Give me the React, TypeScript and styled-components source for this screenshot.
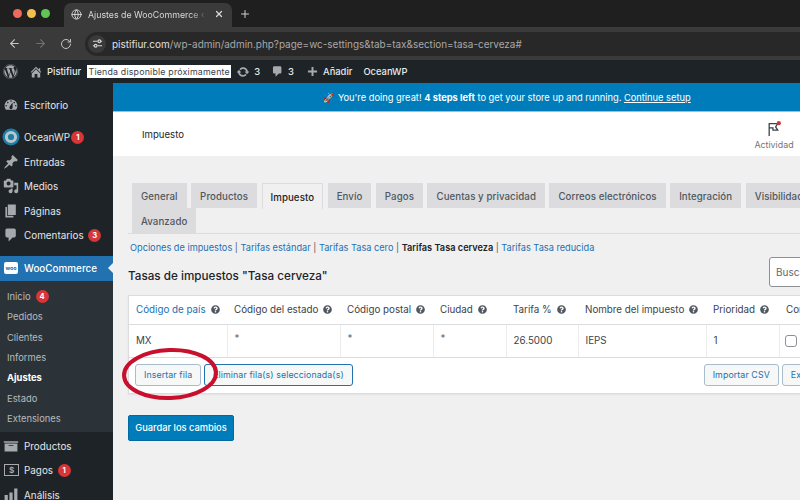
import React from "react";
import styled, { createGlobalStyle } from "styled-components";
import { ArrowLeft, ArrowRight, Globe, Plus, RotateCw, X } from "lucide-react";
import { FaQuestionCircle, FaWordpress } from "react-icons/fa";

const GlobalStyle = createGlobalStyle`
  html, body {
    margin: 0;
    padding: 0;
    background: #f0f0f1;
    font-family: "Inter", "Liberation Sans", sans-serif;
  }
  * {
    box-sizing: border-box;
  }
`;

const Shell = styled.div`
  width: 800px;
  height: 500px;
  display: flex;
  flex-direction: column;
  overflow: hidden;
  position: relative;
`;

/* browser chrome */
const TabStrip = styled.div`
  height: 27px;
  background: #1f1f1f;
  display: flex;
  align-items: flex-end;
  padding-left: 13px;
`;
const Lights = styled.div`
  display: flex;
  gap: 5px;
  align-self: center;
  margin-right: 14px;
`;
const Light = styled.span<{ $color: string }>`
  width: 9px;
  height: 9px;
  border-radius: 50%;
  background: ${(p) => p.$color};
`;
const BrowserTab = styled.div`
  width: 168px;
  height: 24px;
  background: #3a3a3a;
  border-radius: 7px 7px 0 0;
  display: flex;
  align-items: center;
  padding: 0 8px 2px 7px;
  color: #d8d8d8;
  font-size: 8.8px;
  gap: 6px;
  svg {
    flex: none;
  }
`;
const TabTitle = styled.span`
  flex: 1;
  white-space: nowrap;
  overflow: hidden;
  mask-image: linear-gradient(to right, #000 85%, transparent);
`;
const NewTab = styled.div`
  color: #cfcfcf;
  display: flex;
  align-self: center;
  margin-left: 7px;
`;
const Toolbar = styled.div`
  height: 33px;
  background: #3a3a3a;
  display: flex;
  align-items: center;
  padding-left: 8px;
  color: #c4c4c4;
`;
const NavButton = styled.span<{ $dim?: boolean; $width?: number }>`
  display: flex;
  width: ${(p) => p.$width ?? 26}px;
  color: ${(p) => (p.$dim ? "#707070" : "#c4c4c4")};
`;
const AddressBar = styled.div`
  flex: 1;
  height: 24px;
  background: #282828;
  border-radius: 12px 0 0 12px;
  display: flex;
  align-items: center;
  padding-left: 3px;
  font-size: 9.95px;
  color: #a8a8a8;
  white-space: nowrap;
  b {
    font-weight: 400;
    color: #e2e2e2;
  }
`;
const SiteChip = styled.span`
  width: 18px;
  height: 18px;
  border-radius: 50%;
  background: #3a3a3a;
  margin-right: 6px;
  display: flex;
  align-items: center;
  justify-content: center;
`;

/* wp admin bar */
const AdminBar = styled.div`
  height: 23px;
  background: #1d2327;
  display: flex;
  align-items: center;
  color: #e8eaeb;
  font-size: 9.4px;
  font-weight: 500;
  white-space: nowrap;
  svg {
    color: #a7aaad;
    flex: none;
  }
`;
const BarItem = styled.span<{ $gap?: number; $left?: number }>`
  display: flex;
  align-items: center;
  gap: ${(p) => p.$gap ?? 5}px;
  margin-left: ${(p) => p.$left ?? 0}px;
`;
const StoreBadge = styled.span`
  background: #fff;
  color: #3c434a;
  font-weight: 400;
  font-size: 8.8px;
  letter-spacing: 0.2px;
  height: 13px;
  width: 144px;
  margin-left: 6px;
  display: flex;
  align-items: center;
  justify-content: center;
`;

const Body = styled.div`
  flex: 1;
  display: flex;
  min-height: 0;
`;

/* sidebar */
const Sidebar = styled.nav`
  width: 113px;
  flex: none;
  background: #1d2327;
  padding-top: 10px;
  color: #f0f0f1;
  font-size: 9.9px;
`;
const MenuItem = styled.div<{ $top?: number; $current?: boolean }>`
  height: 24.5px;
  margin-top: ${(p) => p.$top ?? 0}px;
  display: flex;
  align-items: center;
  padding-left: 24px;
  position: relative;
  white-space: nowrap;
  background: ${(p) => (p.$current ? "#2271b1" : "transparent")};
  color: ${(p) => (p.$current ? "#fff" : "#e4e6e7")};
  font-weight: ${(p) => (p.$current ? 500 : 400)};
  ${(p) =>
    p.$current &&
    `&::after {
      content: "";
      position: absolute;
      right: 0;
      top: 7px;
      border: 5px solid transparent;
      border-right-color: #f0f0f1;
      border-left-width: 0;
    }`}
`;
const MenuIcon = styled.span`
  position: absolute;
  left: 0;
  top: 0;
  width: 22px;
  height: 100%;
  display: flex;
  align-items: center;
  justify-content: center;
  color: #a7aaad;
`;
const WooIcon = styled.span`
  width: 14px;
  height: 12px;
  background: #fff;
  border-radius: 2px;
  color: #2271b1;
  font-size: 5.4px;
  font-weight: 700;
  display: flex;
  align-items: center;
  justify-content: center;
`;
const Count = styled.span<{ $left?: number }>`
  width: 13px;
  height: 13px;
  border-radius: 50%;
  background: #d63638;
  color: #fff;
  font-size: 7.6px;
  font-weight: 700;
  display: inline-flex;
  align-items: center;
  justify-content: center;
  margin-left: ${(p) => p.$left ?? 4.5}px;
`;
const SubMenu = styled.div`
  background: #2c3338;
  padding: 6px 0 3px;
  margin-bottom: 2px;
  font-size: 9.4px;
`;
const SubItem = styled.div<{ $current?: boolean }>`
  height: 20.3px;
  padding-left: 7px;
  display: flex;
  align-items: center;
  color: ${(p) => (p.$current ? "#fff" : "#b6babd")};
  font-weight: ${(p) => (p.$current ? 700 : 400)};
`;

/* main area */
const Main = styled.main`
  flex: 1;
  min-width: 0;
  overflow: hidden;
  background: #f0f0f1;
  color: #3c434a;
`;
const Banner = styled.div`
  height: 29px;
  background: #007cba;
  color: #fff;
  font-size: 9.3px;
  display: flex;
  align-items: center;
  justify-content: center;
  padding-left: 101px;
  white-space: pre;
  border-bottom: 1px solid #8fc4e0;
  a {
    color: #fff;
    text-decoration: underline;
  }
`;
const Header = styled.header`
  height: 44px;
  background: #fff;
  display: flex;
  align-items: center;
  justify-content: space-between;
  padding-left: 29px;
  font-size: 9.6px;
  color: #1e1e1e;
`;
const Activity = styled.div`
  width: 44px;
  display: flex;
  flex-direction: column;
  align-items: center;
  gap: 3px;
  color: #757575;
  font-size: 8.9px;
  margin-top: 3px;
  margin-right: 4px;
`;
const Content = styled.div`
  width: 716px;
  padding: 27px 0 0 15px;
`;
const TabNav = styled.div`
  display: flex;
  flex-wrap: wrap;
  column-gap: 4.5px;
  padding-left: 4px;
  border-bottom: 1px solid #dcdcde;
`;
const SettingsTab = styled.div<{ $active?: boolean }>`
  height: ${(p) => (p.$active ? 26 : 25)}px;
  margin-bottom: ${(p) => (p.$active ? -1 : 0)}px;
  padding: 1px 8px 0;
  display: flex;
  align-items: center;
  font-size: 9.7px;
  font-weight: 500;
  letter-spacing: 0.07px;
  white-space: nowrap;
  background: ${(p) => (p.$active ? "#f0f0f1" : "#dcdcde")};
  color: ${(p) => (p.$active ? "#1d2327" : "#50575e")};
  border: 1px solid #dcdcde;
  border-bottom-width: ${(p) => (p.$active ? 0 : 1)}px;
`;
const SubLinks = styled.div`
  display: flex;
  margin-top: 8px;
  padding-left: 2px;
  font-size: 9.2px;
  white-space: pre;
  color: #2271b1;
  b {
    color: #1d2327;
    font-weight: 600;
  }
  i {
    color: #50575e;
    font-style: normal;
  }
`;
const TitleRow = styled.div`
  display: flex;
  justify-content: space-between;
  align-items: center;
  margin-top: 4px;
`;
const Title = styled.h2`
  margin: 8px 0 0;
  font-size: 11.7px;
  font-weight: 500;
  color: #1d2327;
`;
const Search = styled.div`
  width: 60px;
  height: 30px;
  background: #fff;
  border: 1px solid #8c8f94;
  border-radius: 3px;
  color: #646970;
  font-size: 10px;
  display: flex;
  align-items: center;
  padding-left: 6px;
`;
const Card = styled.div`
  width: 737px;
  margin-top: 8px;
  background: #fff;
  border: 1px solid #dcdcde;
  box-shadow: 0 1px 2px rgba(0, 0, 0, 0.06);
`;
const Table = styled.table`
  border-collapse: collapse;
  table-layout: fixed;
  width: 100%;
  font-size: 9.8px;
  white-space: nowrap;
`;
const Th = styled.th<{ $width: number; $link?: boolean }>`
  width: ${(p) => p.$width}px;
  height: 28px;
  padding: 0 0 0 7px;
  text-align: left;
  font-weight: 400;
  overflow: hidden;
  color: ${(p) => (p.$link ? "#2271b1" : "#3c434a")};
  border-bottom: 1px solid #dcdcde;
  svg {
    color: #50575e;
    margin-left: 5px;
    vertical-align: -1px;
  }
`;
const Td = styled.td`
  height: 33px;
  padding: 0 0 0 7px;
  border-left: 1px solid #ececed;
  border-bottom: 1px solid #dcdcde;
  &:first-child {
    border-left: 0;
  }
`;
const Star = styled.span`
  position: relative;
  top: -2px;
  color: #646970;
`;
const Check = styled.span`
  display: block;
  width: 12px;
  height: 12px;
  margin-left: -2px;
  border: 1px solid #8c8f94;
  border-radius: 3px;
  background: #fff;
`;
const CardFooter = styled.div`
  height: 35px;
  display: flex;
  align-items: center;
  padding: 0 7px 1px 6px;
  gap: 3px;
`;
const Button = styled.button<{ $focus?: boolean; $right?: boolean }>`
  height: 22px;
  padding: 0 8px;
  font-family: inherit;
  font-size: 8.8px;
  letter-spacing: 0.1px;
  color: #2271b1;
  background: #f6f7f7;
  border: 1px solid ${(p) => (p.$focus ? "#2271b1" : "#a9bccb")};
  border-radius: 3px;
  white-space: nowrap;
  margin-left: ${(p) => (p.$right ? "auto" : 0)};
`;
const SaveButton = styled.button`
  display: block;
  margin-top: 21px;
  height: 26px;
  width: 106px;
  padding: 0;
  background: #007cba;
  border: 1px solid #006ba1;
  border-radius: 2px;
  color: #fff;
  font-family: inherit;
  font-size: 9.3px;
  font-weight: 500;
  white-space: nowrap;
`;
const Annotation = styled.svg`
  position: absolute;
  left: 118px;
  top: 342px;
  pointer-events: none;
`;

/* wp-admin glyphs on their 20 unit grid */
const glyphs = {
  dashboard:
    "M3.76 16h12.48c1.1-1.37 1.76-3.11 1.76-5 0-4.42-3.58-8-8-8s-8 3.58-8 8c0 1.89.66 3.63 1.76 5zM10 4c.55 0 1 .45 1 1s-.45 1-1 1-1-.45-1-1 .45-1 1-1zM6 6c.55 0 1 .45 1 1s-.45 1-1 1-1-.45-1-1 .45-1 1-1zm8 0c.55 0 1 .45 1 1s-.45 1-1 1-1-.45-1-1 .45-1 1-1zm-5.37 5.55L12 7v6c0 1.1-.9 2-2 2s-2-.9-2-2c0-.57.24-1.08.63-1.45zM4 10c.55 0 1 .45 1 1s-.45 1-1 1-1-.45-1-1 .45-1 1-1zm12 0c.55 0 1 .45 1 1s-.45 1-1 1-1-.45-1-1 .45-1 1-1z",
  pin: "M10.44 3.02l1.82-1.82 6.36 6.35-1.83 1.82c-1.05-.68-2.48-.57-3.41.36l-.75.75c-.92.93-1.04 2.35-.35 3.41l-1.83 1.82-2.41-2.41-2.8 2.79c-.42.42-3.38 2.71-3.8 2.29s1.86-3.39 2.28-3.81l2.79-2.79L4.1 9.36l1.83-1.82c1.05.69 2.48.57 3.4-.36l.75-.75c.93-.92 1.05-2.35.36-3.41z",
  media:
    "M13 11V4c0-.55-.45-1-1-1h-1.67L9 1H5L3.67 3H2c-.55 0-1 .45-1 1v7c0 .55.45 1 1 1h10c.55 0 1-.45 1-1zM7 4.5c1.38 0 2.5 1.12 2.5 2.5S8.38 9.5 7 9.5 4.5 8.38 4.5 7 5.62 4.5 7 4.5zM14 6h5v10.5c0 1.38-1.12 2.5-2.5 2.5S14 17.88 14 16.5s1.12-2.5 2.5-2.5c.17 0 .34.02.5.05V9h-3V6zm-4 8.05V13h2v3.5c0 1.38-1.12 2.5-2.5 2.5S7 17.88 7 16.5 8.12 14 9.5 14c.17 0 .34.02.5.05z",
  page: "M6 15V2h10v13H6zm-1 1h8v2H3V5h2v11z",
  comment: "M5 2h9c1.1 0 2 .9 2 2v7c0 1.1-.9 2-2 2h-2l-5 5v-5H5c-1.1 0-2-.9-2-2V4c0-1.1.9-2 2-2z",
  home: "M16 8.5l1.53 1.53-1.06 1.06L10 4.62l-6.47 6.47-1.06-1.06L10 2.5l4 4v-2h2v4zM10 6.04l6 5.99V18H12v-5H8v5H4v-5.97z",
  sync: "M10.2 3.28c3.53 0 6.43 2.61 6.92 6h2.08l-3.5 4-3.5-4h2.32c-.45-1.97-2.21-3.45-4.32-3.45-1.45 0-2.73.71-3.54 1.78L4.95 5.66C6.23 4.2 8.11 3.28 10.2 3.28zm-.4 13.44c-3.52 0-6.43-2.61-6.92-6H.8l3.5-4c1.17 1.33 2.33 2.67 3.5 4H5.48c.45 1.97 2.21 3.45 4.32 3.45 1.45 0 2.73-.71 3.54-1.78l1.71 1.95c-1.28 1.46-3.15 2.38-5.25 2.38z",
  plus: "M17 8.5v3h-5.5V17h-3v-5.5H3v-3h5.5V3h3v5.5z",
  archive: "M19 4v2H1V4h18zM2 7h16v10H2V7zm11 3V9H7v1h6z",
  chart: "M18 18V2h-4v16h4zm-6 0V7H8v11h4zm-6 0v-8H2v8h4z",
};

const Glyph = ({ name, size = 16 }: { name: keyof typeof glyphs; size?: number }) => (
  <svg width={size} height={size} viewBox="0 0 20 20" fill="currentColor" fillRule="evenodd">
    <path d={glyphs[name]} />
  </svg>
);

const Help = () => <FaQuestionCircle size={9} />;

const columns = [
  { name: "Código de país", width: 98, link: true },
  { name: "Código del estado", width: 113 },
  { name: "Código postal", width: 93 },
  { name: "Ciudad", width: 73 },
  { name: "Tarifa %", width: 72 },
  { name: "Nombre del impuesto", width: 128 },
  { name: "Prioridad", width: 73 },
  { name: "Compuesto", width: 85 },
];

const settingTabs = [
  "General",
  "Productos",
  "Impuesto",
  "Envío",
  "Pagos",
  "Cuentas y privacidad",
  "Correos electrónicos",
  "Integración",
  "Visibilidad",
  "Avanzado",
];

const subItems = ["Pedidos", "Clientes", "Informes"];

export default function App() {
  return (
    <Shell>
      <GlobalStyle />
      <TabStrip>
        <Lights>
          <Light $color="#ed6a5e" />
          <Light $color="#f4bf4f" />
          <Light $color="#61c554" />
        </Lights>
        <BrowserTab>
          <Globe size={11} />
          <TabTitle>Ajustes de WooCommerce ‹ Pistifiur</TabTitle>
          <X size={10} strokeWidth={3} />
        </BrowserTab>
        <NewTab>
          <Plus size={12} strokeWidth={2} />
        </NewTab>
      </TabStrip>
      <Toolbar>
        <NavButton>
          <ArrowLeft size={13} />
        </NavButton>
        <NavButton $dim>
          <ArrowRight size={13} />
        </NavButton>
        <NavButton $width={25}>
          <RotateCw size={12} />
        </NavButton>
        <AddressBar>
          <SiteChip>
            <svg width="11" height="11" viewBox="0 0 12 12" fill="none" stroke="#d4d4d4" strokeWidth="1.2">
              <path d="M1 3.5h5M9.5 3.5H11M1 8.5h1.5M6 8.5h5" />
              <circle cx="8" cy="3.5" r="1.5" />
              <circle cx="4" cy="8.5" r="1.5" />
            </svg>
          </SiteChip>
          <span>
            <b>pistifiur.com</b>/wp-admin/admin.php?page=wc-settings&amp;tab=tax&amp;section=tasa-cerveza#
          </span>
        </AddressBar>
      </Toolbar>
      <AdminBar>
        <BarItem $left={3}>
          <FaWordpress size={15} />
        </BarItem>
        <BarItem $left={11} $gap={4}>
          <Glyph name="home" size={14} />
          Pistifiur
        </BarItem>
        <StoreBadge>Tienda disponible próximamente</StoreBadge>
        <BarItem $left={5} $gap={4}>
          <Glyph name="sync" size={14} />
          3
        </BarItem>
        <BarItem $left={11} $gap={4}>
          <Glyph name="comment" size={13} />
          3
        </BarItem>
        <BarItem $left={12} $gap={4}>
          <Glyph name="plus" size={13} />
          Añadir
        </BarItem>
        <BarItem $left={11}>OceanWP</BarItem>
      </AdminBar>
      <Body>
        <Sidebar>
          <MenuItem>
            <MenuIcon>
              <Glyph name="dashboard" />
            </MenuIcon>
            Escritorio
          </MenuItem>
          <MenuItem $top={7.5}>
            <MenuIcon>
              <svg width="18" height="18" viewBox="0 0 18 18">
                <circle cx="9" cy="9" r="8.5" fill="#1f7ea6" />
                <circle cx="9" cy="9" r="4.6" fill="none" stroke="#b9c6cd" strokeWidth="3" />
              </svg>
            </MenuIcon>
            OceanWP
            <Count $left={1.5}>1</Count>
          </MenuItem>
          <MenuItem>
            <MenuIcon>
              <Glyph name="pin" />
            </MenuIcon>
            Entradas
          </MenuItem>
          <MenuItem>
            <MenuIcon>
              <Glyph name="media" />
            </MenuIcon>
            Medios
          </MenuItem>
          <MenuItem>
            <MenuIcon>
              <Glyph name="page" />
            </MenuIcon>
            Páginas
          </MenuItem>
          <MenuItem>
            <MenuIcon>
              <Glyph name="comment" />
            </MenuIcon>
            Comentarios
            <Count>3</Count>
          </MenuItem>
          <MenuItem $top={8.5} $current>
            <MenuIcon>
              <WooIcon>woo</WooIcon>
            </MenuIcon>
            WooCommerce
          </MenuItem>
          <SubMenu>
            <SubItem>
              Inicio
              <Count $left={5}>4</Count>
            </SubItem>
            {subItems.map((item) => (
              <SubItem key={item}>{item}</SubItem>
            ))}
            <SubItem $current>Ajustes</SubItem>
            <SubItem>Estado</SubItem>
            <SubItem>Extensiones</SubItem>
          </SubMenu>
          <MenuItem>
            <MenuIcon>
              <Glyph name="archive" />
            </MenuIcon>
            Productos
          </MenuItem>
          <MenuItem>
            <MenuIcon>
              <svg width="15" height="12" viewBox="0 0 15 12" fill="none" stroke="#a7aaad">
                <rect x="0.5" y="0.5" width="14" height="11" />
                <text x="7.5" y="9" fontSize="8" fontWeight="700" textAnchor="middle" fill="#a7aaad" stroke="none">
                  $
                </text>
              </svg>
            </MenuIcon>
            Pagos
            <Count>1</Count>
          </MenuItem>
          <MenuItem>
            <MenuIcon>
              <Glyph name="chart" />
            </MenuIcon>
            Análisis
          </MenuItem>
        </Sidebar>
        <Main>
          <Banner>
            <span>🚀 You're doing great! <b>4 steps left</b> to get your store up and running. <a>Continue setup</a></span>
          </Banner>
          <Header>
            Impuesto
            <Activity>
              <svg width="14" height="15" viewBox="0 0 13 14" fill="none">
                <path d="M2 14V2.5h8L8 5.5l2 3H5.5V6.5H2" stroke="#3c434a" strokeWidth="1.2" />
                <circle cx="11" cy="2" r="2" fill="#d63638" />
              </svg>
              Actividad
            </Activity>
          </Header>
          <Content>
            <TabNav>
              {settingTabs.map((tab) => (
                <SettingsTab key={tab} $active={tab === "Impuesto"}>
                  {tab}
                </SettingsTab>
              ))}
            </TabNav>
            <SubLinks>
              Opciones de impuestos <i>| </i>Tarifas estándar <i>| </i>Tarifas Tasa cero <i>| </i>
              <b>Tarifas Tasa cerveza </b>
              <i>| </i>Tarifas Tasa reducida
            </SubLinks>
            <TitleRow>
              <Title>Tasas de impuestos "Tasa cerveza"</Title>
              <Search>Buscar</Search>
            </TitleRow>
            <Card>
              <Table>
                <thead>
                  <tr>
                    {columns.map((col) => (
                      <Th key={col.name} $width={col.width} $link={col.link}>
                        {col.name}
                        <Help />
                      </Th>
                    ))}
                  </tr>
                </thead>
                <tbody>
                  <tr>
                    <Td>MX</Td>
                    <Td>
                      <Star>*</Star>
                    </Td>
                    <Td>
                      <Star>*</Star>
                    </Td>
                    <Td>
                      <Star>*</Star>
                    </Td>
                    <Td>26.5000</Td>
                    <Td>IEPS</Td>
                    <Td>1</Td>
                    <Td>
                      <Check />
                    </Td>
                  </tr>
                </tbody>
              </Table>
              <CardFooter>
                <Button>Insertar fila</Button>
                <Button $focus>Eliminar fila(s) seleccionada(s)</Button>
                <Button $right>Importar CSV</Button>
                <Button>Exportar CSV</Button>
              </CardFooter>
            </Card>
            <SaveButton>Guardar los cambios</SaveButton>
          </Content>
        </Main>
      </Body>
      <Annotation width="106" height="64" viewBox="0 0 106 64">
        <ellipse
          cx="52"
          cy="32"
          rx="46"
          ry="24"
          fill="none"
          stroke="#c8102e"
          strokeWidth="4"
          transform="rotate(-2 52 32)"
        />
      </Annotation>
    </Shell>
  );
}
